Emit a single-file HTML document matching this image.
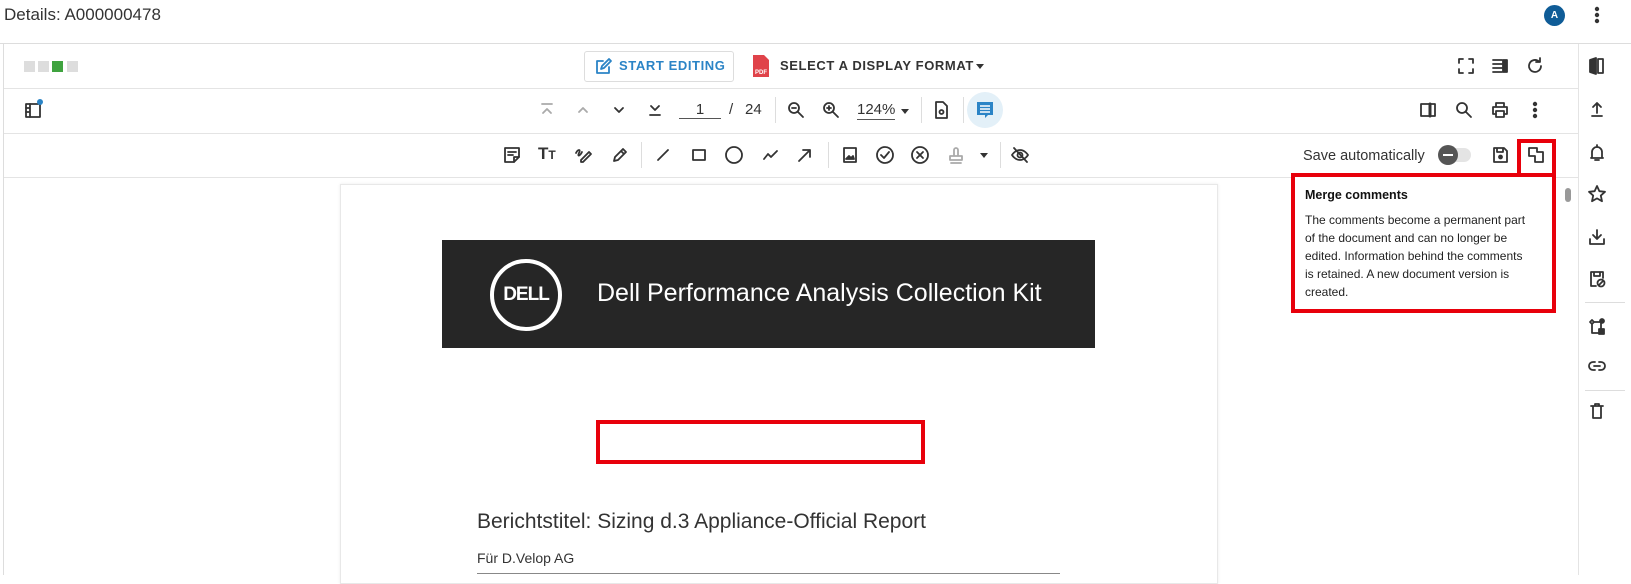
<!DOCTYPE html>
<html><head><meta charset="utf-8"><style>
*{margin:0;padding:0;box-sizing:border-box}
body{width:1631px;height:575px;overflow:hidden;background:#fff;font-family:"Liberation Sans",sans-serif;color:#333;position:relative}
.a{position:absolute}
svg.i{position:absolute;width:20px;height:20px;fill:none;stroke:#333;stroke-width:1.8;stroke-linecap:round;stroke-linejoin:round}
.sep{position:absolute;width:1px;height:26px;background:#ddd}
</style></head><body>
<div class="a" style="left:4px;top:5px;font-size:17px;color:#333">Details: A000000478</div>
<div class="a" style="left:1544px;top:5px;width:21px;height:21px;border-radius:50%;background:#0f5c97;color:#fff;font-size:10px;font-weight:bold;text-align:center;line-height:21px">A</div>
<svg class="i" style="left:1587px;top:5px" viewBox="0 0 20 20"><circle cx="10" cy="4" r="1.3" fill="#333"/><circle cx="10" cy="10" r="1.3" fill="#333"/><circle cx="10" cy="16" r="1.3" fill="#333"/></svg>

<div class="a" style="left:0;top:43px;width:1631px;height:1px;background:#ddd"></div>
<div class="a" style="left:3px;top:44px;width:1px;height:531px;background:#ddd"></div>
<div class="a" style="left:1578px;top:44px;width:1px;height:531px;background:#e4e4e4"></div>
<div class="a" style="left:4px;top:88px;width:1574px;height:1px;background:#e4e4e4"></div>
<div class="a" style="left:4px;top:133px;width:1574px;height:1px;background:#e4e4e4"></div>
<div class="a" style="left:4px;top:177px;width:1574px;height:1px;background:#e4e4e4"></div>

<!-- row1 -->
<div class="a" style="left:24px;top:61px;width:11px;height:11px;background:#ddd"></div>
<div class="a" style="left:38px;top:61px;width:11px;height:11px;background:#ddd"></div>
<div class="a" style="left:52px;top:61px;width:11px;height:11px;background:#3fa33f"></div>
<div class="a" style="left:67px;top:61px;width:11px;height:11px;background:#ddd"></div>
<div class="a" style="left:584px;top:51px;width:150px;height:31px;border:1px solid #ddd;border-radius:3px"></div>
<svg class="i" style="left:593px;top:57px;stroke:#2b84c6" viewBox="0 0 20 20"><path d="M10 4H4v12h12v-6"/><path d="M8 12l1-3 7-7 2 2-7 7z"/></svg>
<div class="a" style="left:619px;top:58px;font-size:13px;color:#2b84c6;letter-spacing:.6px;font-weight:bold">START EDITING</div>
<svg class="a" style="left:752px;top:54px" width="18" height="24" viewBox="0 0 18 24"><path d="M1 1h11l5 5v17H1z" fill="#e0434a"/><text x="3" y="20" font-size="6" fill="#fff" font-family="Liberation Sans" font-weight="bold">PDF</text></svg>
<div class="a" style="left:780px;top:58px;font-size:13px;color:#333;letter-spacing:.6px;font-weight:bold">SELECT A DISPLAY FORMAT</div>
<div class="a" style="left:976px;top:64px;border:4px solid transparent;border-top:5px solid #333"></div>
<svg class="i" style="left:1456px;top:56px" viewBox="0 0 20 20"><path d="M3 7V3h4M13 3h4v4M17 13v4h-4M7 17H3v-4"/></svg>
<svg class="i" style="left:1490px;top:56px" viewBox="0 0 20 20"><path d="M3 4h9M3 8h9M3 12h9M3 16h9"/><rect x="13" y="4" width="4" height="12" fill="#333"/></svg>
<svg class="i" style="left:1525px;top:56px" viewBox="0 0 20 20"><path d="M16 10a6 6 0 1 1-2-4.5"/><path d="M15 2v4h-4"/></svg>

<!-- row2 -->
<svg class="i" style="left:23px;top:100px" viewBox="0 0 20 20"><rect x="3" y="4" width="14" height="13"/><path d="M7 4v13M3 8h4M3 12h4"/></svg>
<div class="a" style="left:37px;top:99px;width:6px;height:6px;border-radius:50%;background:#2b84c6"></div>
<svg class="i" style="left:537px;top:100px;stroke:#aaa" viewBox="0 0 20 20"><path d="M5 4h10M6 13l4-4 4 4"/></svg>
<svg class="i" style="left:573px;top:100px;stroke:#aaa" viewBox="0 0 20 20"><path d="M6 12l4-4 4 4"/></svg>
<svg class="i" style="left:609px;top:100px" viewBox="0 0 20 20"><path d="M6 8l4 4 4-4"/></svg>
<svg class="i" style="left:645px;top:100px" viewBox="0 0 20 20"><path d="M6 6l4 4 4-4M5 15h10"/></svg>
<div class="a" style="left:679px;top:101px;width:42px;height:18px;border-bottom:1px solid #555;text-align:center;font-size:15px">1</div>
<div class="a" style="left:729px;top:101px;font-size:15px">/</div>
<div class="a" style="left:745px;top:101px;font-size:15px">24</div>
<div class="sep" style="left:775px;top:97px"></div>
<svg class="i" style="left:786px;top:100px" viewBox="0 0 20 20"><circle cx="8" cy="8" r="5"/><path d="M12 12l5 5M6 8h4"/></svg>
<svg class="i" style="left:821px;top:100px" viewBox="0 0 20 20"><circle cx="8" cy="8" r="5"/><path d="M12 12l5 5M6 8h4M8 6v4"/></svg>
<div class="a" style="left:857px;top:101px;font-size:15px;border-bottom:1px solid #555;line-height:18px">124%</div>
<div class="a" style="left:901px;top:109px;border:4px solid transparent;border-top:5px solid #333"></div>
<div class="sep" style="left:921px;top:97px"></div>
<svg class="i" style="left:931px;top:100px" viewBox="0 0 20 20"><path d="M5 2h7l4 4v12H5z"/><circle cx="10.5" cy="12" r="2"/></svg>
<div class="sep" style="left:963px;top:97px"></div>
<div class="a" style="left:967px;top:92px;width:36px;height:36px;border-radius:50%;background:#e3f0f8"></div>
<svg class="a" style="left:975px;top:100px" width="20" height="20" viewBox="0 0 20 20"><path d="M2 2h16v13H13l-3 3v-3H2z" fill="#2b84c6"/><path d="M5 6h10M5 9h10M5 12h10" stroke="#fff" stroke-width="1.4"/></svg>
<svg class="i" style="left:1418px;top:100px" viewBox="0 0 20 20"><rect x="3" y="4" width="14" height="12"/><path d="M12 4v12" stroke-width="3"/></svg>
<svg class="i" style="left:1454px;top:100px" viewBox="0 0 20 20"><circle cx="8" cy="8" r="5"/><path d="M12 12l5 5"/></svg>
<svg class="i" style="left:1490px;top:100px" viewBox="0 0 20 20"><path d="M6 7V3h8v4M3 7h14v7h-3M6 14H3V7"/><rect x="6" y="11" width="8" height="6"/></svg>
<svg class="i" style="left:1525px;top:100px" viewBox="0 0 20 20"><circle cx="10" cy="4" r="1.3" fill="#333"/><circle cx="10" cy="10" r="1.3" fill="#333"/><circle cx="10" cy="16" r="1.3" fill="#333"/></svg>

<!-- row3 -->
<svg class="i" style="left:502px;top:145px" viewBox="0 0 20 20"><path d="M3 3h14v9l-5 5H3z"/><path d="M6 7h8M6 10h5M12 17v-5h5"/></svg>
<div class="a" style="left:538px;top:144px;font-size:17px;font-weight:bold;color:#333">T<span style="font-size:12px">T</span></div>
<svg class="i" style="left:573px;top:145px" viewBox="0 0 20 20"><path d="M3 8c2-4 5-4 3 0s1 3 3-1M8 15l8-8 2 2-8 8H8z"/></svg>
<svg class="i" style="left:610px;top:145px" viewBox="0 0 20 20"><path d="M4 16l1-4 8-8 3 3-8 8z M11 6l3 3"/></svg>
<div class="sep" style="left:641px;top:142px"></div>
<svg class="i" style="left:653px;top:145px" viewBox="0 0 20 20"><path d="M5 15L15 5"/></svg>
<svg class="i" style="left:689px;top:145px" viewBox="0 0 20 20"><rect x="4" y="5" width="12" height="10"/></svg>
<svg class="i" style="left:724px;top:145px" viewBox="0 0 20 20"><circle cx="10" cy="10" r="8"/></svg>
<svg class="i" style="left:761px;top:145px" viewBox="0 0 20 20"><path d="M3 14l4-5 3 3 6-6"/></svg>
<svg class="i" style="left:795px;top:145px" viewBox="0 0 20 20"><path d="M4 16L15 5M8 5h7v7"/></svg>
<div class="sep" style="left:828px;top:142px"></div>
<svg class="i" style="left:840px;top:145px" viewBox="0 0 20 20"><rect x="4" y="3" width="12" height="14"/><path d="M6 14l3-3 2 2 2-2 1 3z" fill="#333"/></svg>
<svg class="i" style="left:875px;top:145px" viewBox="0 0 20 20"><circle cx="10" cy="10" r="8"/><path d="M6 10l3 3 5-6"/></svg>
<svg class="i" style="left:910px;top:145px" viewBox="0 0 20 20"><circle cx="10" cy="10" r="8"/><path d="M7 7l6 6M13 7l-6 6"/></svg>
<svg class="i" style="left:946px;top:145px;stroke:#aaa" viewBox="0 0 20 20"><path d="M8 11V5a2 2 0 0 1 4 0v6M4 11h12v4H4zM5 18h10"/></svg>
<div class="a" style="left:980px;top:153px;border:4px solid transparent;border-top:5px solid #333"></div>
<div class="sep" style="left:1000px;top:142px"></div>
<svg class="i" style="left:1010px;top:145px" viewBox="0 0 20 20"><path d="M2 10s3-5 8-5 8 5 8 5-3 5-8 5-8-5-8-5z"/><circle cx="10" cy="10" r="2.5"/><path d="M4 3l13 14"/></svg>
<div class="a" style="left:1303px;top:148px;font-size:14.5px;color:#333">Save automatically</div>
<div class="a" style="left:1441px;top:148px;width:30px;height:14px;border-radius:7px;background:#e4e4e4"></div>
<div class="a" style="left:1438px;top:145px;width:20px;height:20px;border-radius:50%;background:#555"></div>
<div class="a" style="left:1443px;top:154px;width:10px;height:2px;background:#fff"></div>
<svg class="i" style="left:1490px;top:145px" viewBox="0 0 20 20"><path d="M4 3h10l3 3v11H4z M7 3v4h6V3"/><circle cx="10.5" cy="12" r="1.5" fill="#333"/></svg>
<svg class="i" style="left:1526px;top:145px" viewBox="0 0 20 20"><path d="M3 3h8v4h6v10H9v-6H3z"/></svg>
<div class="a" style="left:1517px;top:139px;width:39px;height:38px;border:4px solid #e8000b"></div>

<!-- doc page -->
<div class="a" style="left:340px;top:184px;width:878px;height:400px;border:1px solid #e8e8e8;box-shadow:0 0 3px rgba(0,0,0,.08)"></div>
<div class="a" style="left:442px;top:240px;width:653px;height:108px;background:#262626"></div>
<div class="a" style="left:490px;top:259px;width:72px;height:72px;border:4px solid #fff;border-radius:50%;color:#fff;font-weight:bold;font-size:19px;text-align:center;line-height:64px;letter-spacing:-1px">DELL</div>
<div class="a" style="left:597px;top:279px;font-size:25px;color:#fff">Dell Performance Analysis Collection Kit</div>
<div class="a" style="left:596px;top:420px;width:329px;height:44px;border:4px solid #e8000b"></div>
<div class="a" style="left:477px;top:510px;font-size:21px;color:#333">Berichtstitel: Sizing d.3 Appliance-Official Report</div>
<div class="a" style="left:477px;top:550px;font-size:14px;color:#333">Für D.Velop AG</div>
<div class="a" style="left:477px;top:573px;width:583px;height:1px;background:#888"></div>

<!-- tooltip -->
<div class="a" style="left:1291px;top:173px;width:265px;height:140px;border:4px solid #e8000b;background:#fff"></div>
<div class="a" style="left:1305px;top:188px;font-size:12.5px;font-weight:bold;color:#111">Merge comments</div>
<div class="a" style="left:1305px;top:211px;width:226px;font-size:12px;line-height:18px;color:#222">The comments become a permanent part of the document and can no longer be edited. Information behind the comments is retained. A new document version is created.</div>

<!-- sidebar -->
<svg class="i" style="left:1587px;top:56px" viewBox="0 0 20 20"><path d="M3 4l6-2v16l-6-2z" fill="#333"/><rect x="11" y="3" width="5" height="14"/></svg>
<svg class="i" style="left:1587px;top:99px" viewBox="0 0 20 20"><path d="M10 14V4M6 8l4-4 4 4M5 17h10"/></svg>
<svg class="i" style="left:1587px;top:143px" viewBox="0 0 20 20"><path d="M5 14V9a5 5 0 0 1 10 0v5l1 1H4zM8 17h4M10 2v2"/></svg>
<svg class="i" style="left:1587px;top:184px" viewBox="0 0 20 20"><path d="M10 2l2.4 5.2 5.6.6-4.2 3.8 1.2 5.6L10 14.4 5 17.2l1.2-5.6L2 7.8l5.6-.6z"/></svg>
<svg class="i" style="left:1587px;top:227px" viewBox="0 0 20 20"><path d="M10 3v9M6 8l4 4 4-4M3 12v5h14v-5"/></svg>
<svg class="i" style="left:1587px;top:269px" viewBox="0 0 20 20"><path d="M9 17H4V3h12v6M7 3v4h6V3"/><path d="M12 16l4-4"/><circle cx="14" cy="14" r="3.5"/></svg>
<div class="a" style="left:1585px;top:302px;width:40px;height:1px;background:#ddd"></div>
<svg class="i" style="left:1587px;top:316px" viewBox="0 0 20 20"><path d="M3 6l2-2 2 2-2 2zM7 6h7v7M5 8v9h9"/><rect x="12" y="13" width="5" height="5" fill="#333"/><circle cx="15" cy="5" r="2" fill="#333"/></svg>
<svg class="i" style="left:1587px;top:356px" viewBox="0 0 20 20"><path d="M8 6H6a4 4 0 0 0 0 8h2M12 6h2a4 4 0 0 1 0 8h-2M7 10h6"/></svg>
<div class="a" style="left:1585px;top:390px;width:40px;height:1px;background:#ddd"></div>
<svg class="i" style="left:1587px;top:401px" viewBox="0 0 20 20"><path d="M4 5h12M8 5V3h4v2M6 5v12h8V5"/></svg>
<div class="a" style="left:1565px;top:188px;width:6px;height:14px;border-radius:3px;background:#999"></div>
</body></html>
